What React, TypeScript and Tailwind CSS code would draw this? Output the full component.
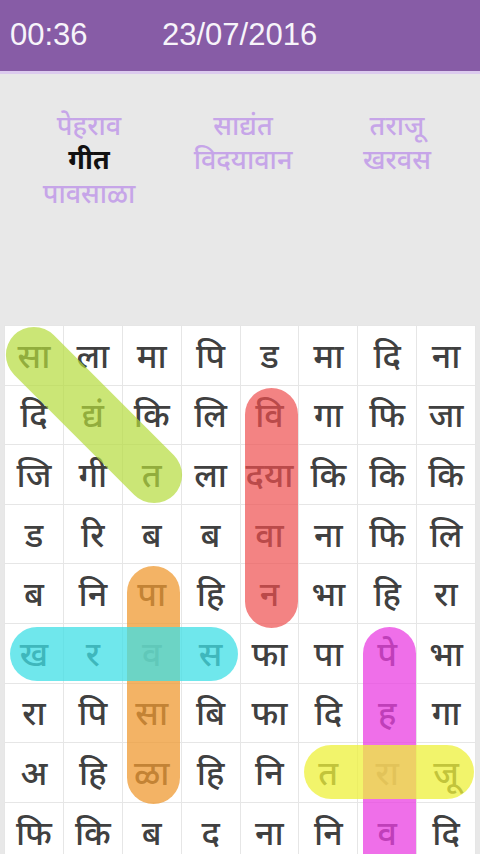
const GRID: string[][] = [
  ['सा', 'ला', 'मा', 'पि', 'ड', 'मा', 'दि', 'ना'],
  ['दि', 'द्यं', 'कि', 'लि', 'वि', 'गा', 'फि', 'जा'],
  ['जि', 'गी', 'त', 'ला', 'दया', 'कि', 'कि', 'कि'],
  ['ड', 'रि', 'ब', 'ब', 'वा', 'ना', 'फि', 'लि'],
  ['ब', 'नि', 'पा', 'हि', 'न', 'भा', 'हि', 'रा'],
  ['ख', 'र', 'व', 'स', 'फा', 'पा', 'पे', 'भा'],
  ['रा', 'पि', 'सा', 'बि', 'फा', 'दि', 'ह', 'गा'],
  ['अ', 'हि', 'ळा', 'हि', 'नि', 'त', 'रा', 'जू'],
  ['फि', 'कि', 'ब', 'द', 'ना', 'नि', 'व', 'दि'],
]

const WORDS: { text: string; found?: boolean }[][] = [
  [{ text: 'पेहराव' }, { text: 'गीत', found: true }, { text: 'पावसाळा' }],
  [{ text: 'साद्यंत' }, { text: 'विदयावान' }],
  [{ text: 'तराजू' }, { text: 'खरवस' }],
]

const FONT = { fontFamily: '"Noto Sans", "Noto Sans Devanagari", "Lohit Devanagari", sans-serif' }
const LATIN = { fontFamily: '"Liberation Sans", Arial, sans-serif' }

export default function App() {
  return (
    <div className="w-[480px] h-[854px] overflow-hidden bg-[#e8e8e8] flex flex-col">
      {/* Header */}
      <div className="h-[74px] bg-[#875ca6] border-b-[3px] border-[#dccbee] flex items-center px-[10px] shrink-0">
        <span className="text-[#f7f4fa] text-[31px] w-[152px]" style={LATIN}>00:36</span>
        <span className="text-[#f7f4fa] text-[31px]" style={LATIN}>23/07/2016</span>
      </div>

      {/* Word list */}
      <div className="h-[251px] shrink-0 grid grid-cols-3 pt-[34px] pl-[12px] pr-[6px]" style={FONT}>
        {WORDS.map((col, i) => (
          <div key={i} className="flex flex-col items-center">
            {col.map(w => (
              <span
                key={w.text}
                className={`text-[27px] leading-[34px] ${w.found ? 'text-[#111] font-bold' : 'text-[#c6a5e8] font-medium'}`}
              >
                {w.text}
              </span>
            ))}
          </div>
        ))}
      </div>

      {/* Puzzle grid */}
      <div className="relative ml-[4px] w-[472px] bg-white" style={FONT}>
        <div className="grid grid-cols-8 border-l border-t border-[#e6e6e6]">
          {GRID.flat().map((ch, i) => (
            <div
              key={i}
              className="h-[59.6px] border-r border-b border-[#e6e6e6] flex items-center justify-center text-[34px] font-medium text-[#404040]"
            >
              {ch}
            </div>
          ))}
        </div>

        {/* Highlights */}
        <div className="absolute left-[-23px] top-[62px] w-[226px] h-[56px] rounded-full bg-[#b5dc3c]/70 rotate-45" />
        <div className="absolute left-[241px] top-[63px] w-[53px] h-[240px] rounded-full bg-[#ee4e4e]/70" />
        <div className="absolute left-[123px] top-[241px] w-[53px] h-[238px] rounded-full bg-[#ef9a32]/75" />
        <div className="absolute left-[6px] top-[302px] w-[228px] h-[54px] rounded-full bg-[#3fdfe6]/75" />
        <div className="absolute left-[359px] top-[302px] w-[53px] h-[260px] rounded-full bg-[#ea3fe2]/75" />
        <div className="absolute left-[300px] top-[420px] w-[170px] h-[54px] rounded-full bg-[#eef03a]/75" />
      </div>
    </div>
  )
}
